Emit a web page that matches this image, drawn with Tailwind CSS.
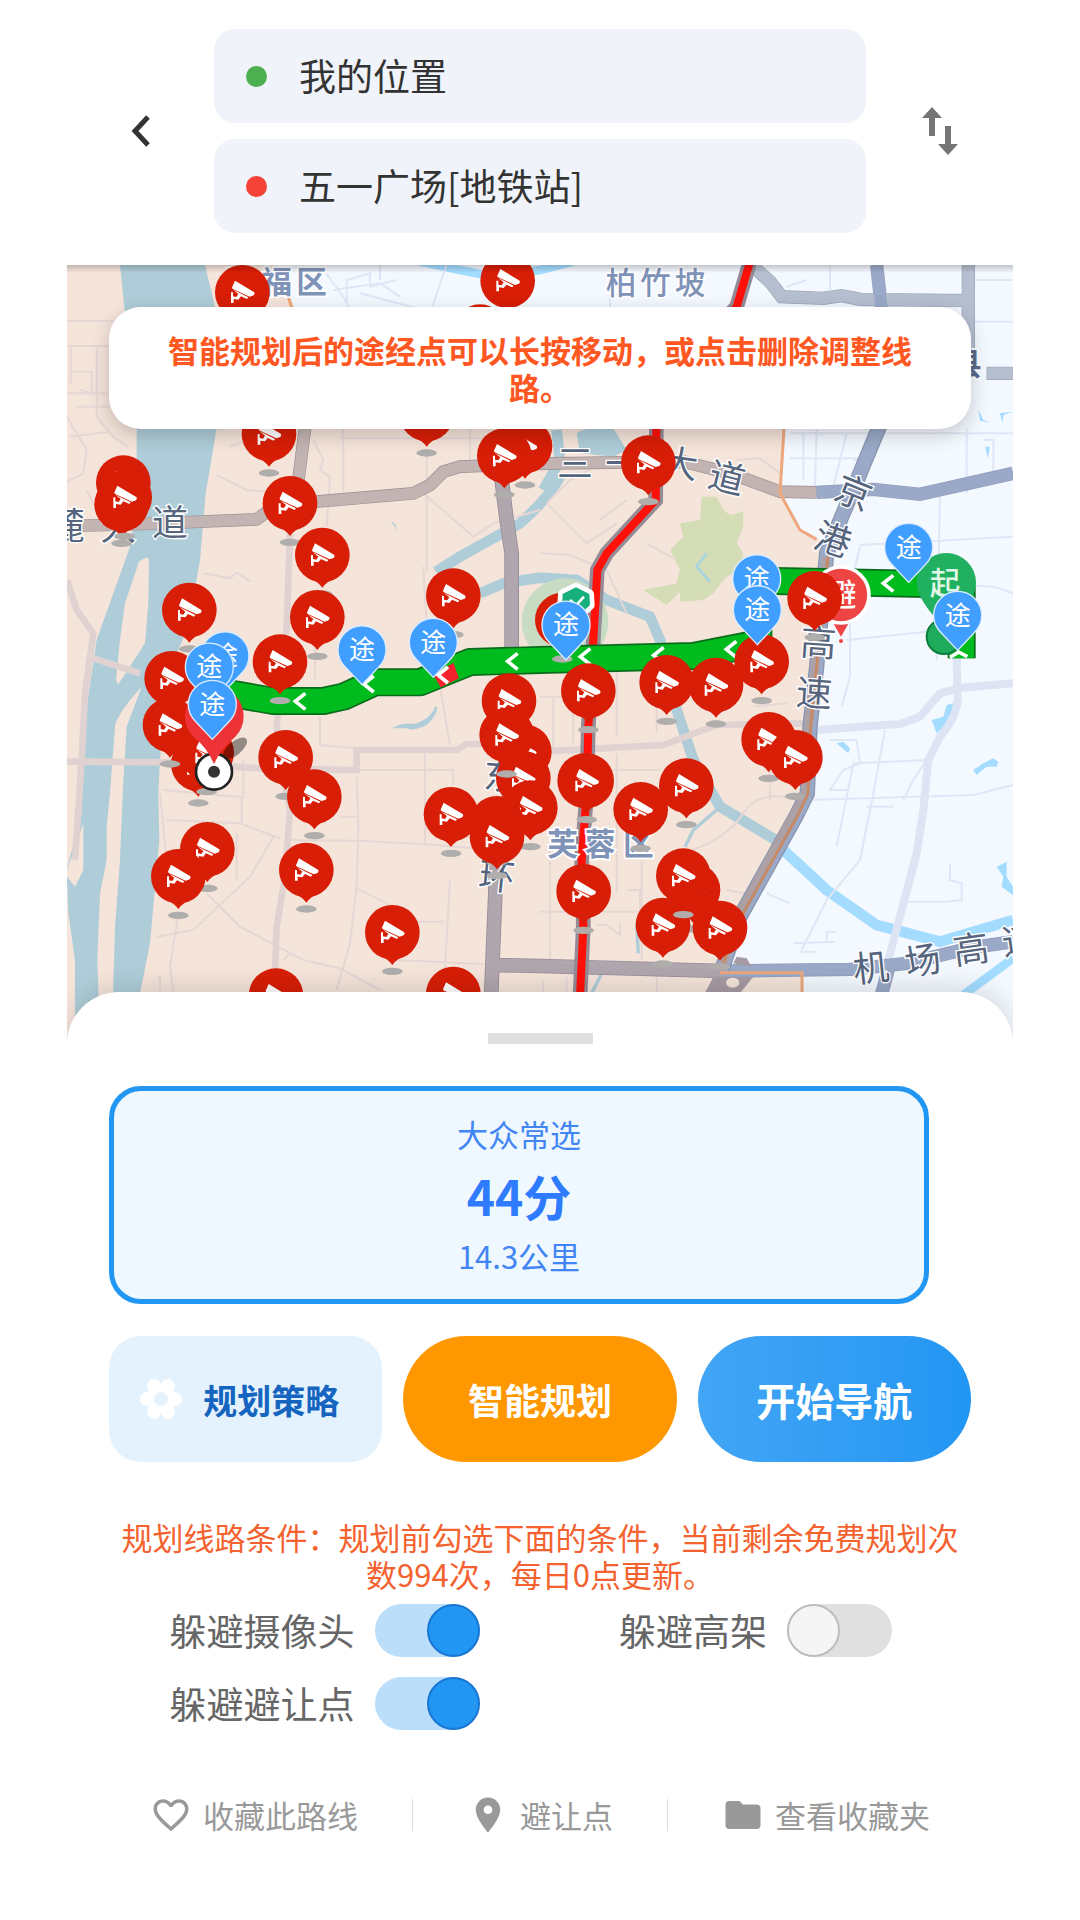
<!DOCTYPE html>
<html lang="zh-CN">
<head>
  <meta charset="UTF-8" />
  <meta name="viewport" content="width=device-width, initial-scale=1.0"/>
  <title>路线规划</title>
  <script src="https://cdn.jsdelivr.net/npm/@tailwindcss/browser@4"></script>
</head>
<body class="bg-white min-h-screen px-[67px] font-['Noto_Sans_CJK_SC',sans-serif]">

  <!-- Start / destination -->
  <header class="flex items-center pt-[29px] pb-8">
    <button type="button" aria-label="返回" class="w-[147px] h-24 flex items-center justify-center">
      <svg class="w-5 h-8" viewBox="0 0 20 32" fill="none" stroke="#333" stroke-width="5"><path d="M17 2 4 16l13 14"/></svg>
    </button>
    <div class="flex-1 flex flex-col gap-4">
      <label class="flex items-center gap-8 h-[94px] px-8 rounded-[21px] bg-[#f0f3f9]">
        <span class="size-[21px] shrink-0 rounded-full bg-[#4caf50]"></span>
        <input type="text" aria-label="起点" value="我的位置" class="flex-1 min-w-0 text-[37px] text-[#333] outline-none" />
      </label>
      <label class="flex items-center gap-8 h-[94px] px-8 rounded-[21px] bg-[#f0f3f9]">
        <span class="size-[21px] shrink-0 rounded-full bg-[#f44336]"></span>
        <input type="text" aria-label="终点" value="五一广场[地铁站]" class="flex-1 min-w-0 text-[37px] text-[#333] outline-none" />
      </label>
    </div>
    <button type="button" aria-label="交换起终点" class="w-[147px] h-24 flex items-center justify-center">
      <svg class="w-9 h-12" viewBox="0 0 36 48" fill="#757575"><path d="M10 0 20 11H13V29H7V11H0ZM23 19h6v18h7L26 48 16 37h7Z"/></svg>
    </button>
  </header>

  <!-- Map -->
  <section class="relative">
    <svg class="block w-full" viewBox="21 15 2838 2325" font-family="'Noto Sans CJK SC', sans-serif">
      <defs>
        <linearGradient id="topShade" x2="0" y2="1">
          <stop offset="0" stop-color="#000" stop-opacity=".2"/>
          <stop offset="1" stop-color="#000" stop-opacity="0"/>
        </linearGradient>
        <g id="cam">
          <ellipse cy="117" rx="31" ry="11" fill="#b0aeac"/>
          <circle r="82" fill="#d81e06"/>
          <path d="M-42 68Q-14 78 0 98Q14 78 42 68Z" fill="#d81e06"/>
          <path d="M-22-35 36 0Q38 5 34 9L22 13-30-11Q-32-16-29-19ZM-28-8 18 15 14 20-4 12-12 22-26 20V32H-34V0H-28V12L-18 14-12 5Z" fill="#fff"/>
        </g>
        <g id="via">
          <path d="M0 104-51 50A72 72 0 1 1 51 50Z" fill="#409eff" stroke="#dcecff" stroke-width="4"/>
          <text y="27" font-size="78" text-anchor="middle" fill="#fff">途</text>
        </g>
        <path id="chev" d="M16-24-14 0 16 24" fill="none" stroke="#fff" stroke-width="11"/>
      </defs>

      <rect x="21" y="15" width="2838" height="2325" fill="#f4f8ff"/>

      <!-- district -->
      <path d="M21 15H480L640 15 690 110 710 160 1100 330 2175 505 2160 700 2220 810 2300 850 2270 1220 2252 1380 2245 1600 2210 1660 2040 1970 1980 2135H2230V2340H21Z" fill="#f5e4da"/>

      <!-- river -->
      <g fill="#aecdd8">
        <path d="M180 15H435L465 140 470 505 437 700 420 900 385 1100 320 1250 300 1500 295 1600 298 1740 280 1940 270 2050 240 2200 215 2340H45L45 2100 25 1960 20 1830 65 1660 65 1500 80 1340 110 1140 210 860 230 730 230 500Z"/>
        <path d="M1550 520Q1600 490 1660 505L1700 570 1660 590 1560 580ZM995 1405Q1030 1385 1060 1392 1110 1380 1125 1340H1132Q1132 1365 1100 1395 1060 1415 1040 1405ZM995 785Q1015 795 1010 822 1012 800 995 790Z"/>
      </g>
      <g fill="#f5e4da">
        <path d="M237 905Q265 885 267 900L265 1030 255 1150 175 1273 168 1260 180 1140 195 1030Z"/>
        <path d="M245 1280 210 1320Q165 1380 165 1400L150 1600 140 1700 140 1800 120 1900 112 2100 120 2340H155L165 2000 180 1800 188 1600 200 1400Z"/>
        <path d="M70 1690V1830L45 1880 21 1850V1830Z"/>
      </g>
      <g fill="none" stroke="#aecdd8" stroke-width="32">
        <path d="M1500 650Q1470 710 1380 790L1200 890 1128 935"/>
        <path d="M1260 1000 1330 970 1440 953 1550 960 1640 1020 1770 1070 1800 1140 1850 1350 1900 1500 1980 1640 2180 1760"/>
        <path d="M1490 510 1500 600 1450 690"/>
      </g>
      <path d="M1970 1650 1900 1710 1875 1760M1635 2120 1595 2200M1730 1990 1735 2080" fill="none" stroke="#aecdd8" stroke-width="10"/>
      <g fill="none" stroke="#a3dcff" stroke-width="32">
        <path d="M2170 1770 2300 1890 2450 1995 2640 2045 2859 1980"/>
        <path d="M2710 2205 2859 2095" stroke-width="26"/>
        <path d="M1060 0 1200 30 1300 50 1440 30 1540 5" stroke-width="26"/>
      </g>
      <g fill="#a3dcff">
        <path d="M2615 1380 2650 1370 2660 1335 2680 1330 2670 1380 2630 1420ZM2740 1530 2770 1510 2800 1495 2815 1505 2810 1520 2780 1520 2750 1545ZM2330 1450 2350 1445 2370 1465 2365 1480ZM2810 1820 2840 1805 2840 1850 2859 1880V1905L2825 1880 2830 1850ZM2755 450 2770 480 2790 488 2760 482ZM2820 460 2859 455 2830 465 2828 490ZM2775 560H2790L2784 595Z"/>
      </g>

      <!-- parks -->
      <path d="M1925 710 1970 710 1990 750 2010 765 2050 755V800L2030 850 2050 880 2040 920 1990 960 1960 1000 1930 1020 1860 1025 1860 995 1820 1035 1750 990 1850 970 1860 930 1830 870 1870 830 1860 790 1920 780Z" fill="#d5ddb6"/>
      <path d="M1940 880 1910 920 1950 965" fill="none" stroke="#a9d5dd" stroke-width="9"/>
      <circle cx="1515" cy="1085" r="130" fill="#c8dcc4"/>
      <circle cx="1515" cy="1085" r="72" fill="#f5e4da"/>

      <!-- small streets, west -->
      <g fill="none" stroke="#e6d7d5" stroke-width="6">
        <path d="M21 183H190M21 258H200M32 260V370M110 260V470L160 530 205 560M35 335H95V400L60 390M21 400H140L180 430M50 440H150M30 530 150 515M21 470 80 570 70 640 21 665M80 690 110 750"/>
        <path d="M470 645 560 690 690 700M510 560 590 530M470 505H500M760 540 790 600 780 630 810 650 800 800M850 505V700M1100 580V940M1090 700 1240 830 1300 790 1440 750M1230 505V600M840 535H1440M430 940 510 955 530 938 570 965M1090 920 1100 1100"/>
        <path d="M310 1590 550 1612V1500M320 1680 540 1690 660 1735M545 1612V1690M640 1730 570 1850 400 2010 290 2030M440 1900 540 2000 730 2100 840 2125 960 2190M530 1720V1860M690 1740 890 1742 1090 1752 1240 1765M890 1550 895 1700 890 1880 870 2050 830 2190M890 1885 1000 1940M1095 1480V1750M690 1530H1180V1575M840 1670H890M1170 1860 1150 2210M1000 2100 1270 2112M1060 1985H1150M355 1960 330 2120 340 2200M300 1600 320 1800M780 1370V1455L890 1465M1140 1280 1170 1455M765 1070V1260M290 2150H300V2190M670 2100 690 2080"/>
        <path d="M1460 730 1530 660 1660 590M1460 730 1580 850 1670 790M1620 780 1700 720M1440 880 1530 885 1640 930 1700 1060M1440 1310H1540V1450M1670 1150V1430M1790 1310V1420M1480 1310V1480M1660 1530H1800M1670 1480V1900M1745 1800V2100M1470 1750V2100M1440 1955H1800M1880 1775Q2000 1740 2050 1660T2220 1625M2130 1530V1620M2180 1330 2080 1340M1700 1890H1740V1990M1610 1995H1640L1680 2025V1990M2000 1890 2100 1910M1450 2160V2210M1790 2140V2200M1520 2150V2210M1860 1300H1940"/>
        <path d="M2030 600 2100 595 2160 640M1850 900 1760 850"/>
      </g>
      <!-- small streets, east -->
      <g fill="none" stroke="#dfe6f5" stroke-width="6">
        <path d="M780 15 850 110 880 170M860 130V60L930 40V80L1010 60M820 90 960 70 1020 110M900 100 1090 150M1160 15 1110 160M960 15V60M1650 15V140M2180 80 2240 60M2310 15V90M2660 120V230M2859 60H2730V20M2550 185H2859"/>
        <path d="M2190 520H2859M2230 520V660M2270 510 2265 680M2360 520 2320 680M2190 595H2400M2380 600 2420 600M2640 700 2630 1200M2720 505V700M2770 540H2800V640M2859 830 2400 855M2859 1000 2800 980 2380 960M2360 1140 2600 1115M2400 860 2370 980 2370 1250 2345 1340M2240 1620 2740 1605 2859 1575M2475 1410 2440 1600 2400 1800 2300 1920 2225 2070M2380 1510 2600 1500 2560 1560 2530 1620M2380 1510 2330 1760M2310 1440H2390L2400 1510 2350 1530 2310 1590H2360M2420 1640H2500M2120 1900 2190 1930M2200 2050 2325 2045M2300 2050V2015H2330M2670 1810V1860L2705 1870V1920L2660 1925H2540M2220 2075H2270"/>
      </g>

      <!-- secondary roads -->
      <g fill="none" stroke="#dfd2d1" stroke-width="20">
        <path d="M21 960 50 1050 100 1120 75 1300 65 1500 45 1800M21 1505 330 1507 600 1525 890 1530V1470H1190L1220 1452H1300"/>
        <path d="M690 820 680 1100 655 1350 650 1400 680 1600 690 1650 675 1850 650 2000 640 2260M1440 1475 1810 1455 1970 1395 2240 1390M100 1195 240 1240"/>
      </g>
      <g fill="none" stroke="#dde4f3" stroke-width="24">
        <path d="M2270 1410 2400 1400 2520 1392 2580 1370 2640 1300 2700 1284 2859 1270M2690 1180 2692 1300Q2700 1360 2640 1430L2605 1500 2590 1650 2570 1780 2480 2120"/>
      </g>

      <!-- main roads -->
      <g fill="none" stroke="#9d8f90" stroke-width="38">
        <path d="M21 798 250 792 590 778 650 735 1060 700 1110 675 1150 635 1200 620 1480 610 1870 605 2010 640 2160 695 2270 697"/>
        <path d="M735 505 715 660"/>
      </g>
      <g fill="none" stroke="#c2b4b2" stroke-width="34">
        <path d="M21 798 250 792 590 778 650 735 1060 700 1110 675 1150 635 1200 620 1480 610 1870 605 2010 640 2160 695 2270 697"/>
        <path d="M735 505 715 660"/>
      </g>
      <g fill="none" stroke="#948b97" stroke-width="44">
        <path d="M1325 660 1340 780 1355 880V1180L1350 1600 1310 1800 1288 2340M1310 2115 1440 2118 1990 2133M1960 2200 2000 2120"/>
      </g>
      <g fill="none" stroke="#b0a6ae" stroke-width="39">
        <path d="M1325 660 1340 780 1355 880V1180L1350 1600 1310 1800 1288 2340M1310 2115 1440 2118 1990 2133M1960 2200 2000 2120"/>
      </g>
      <g fill="none" stroke="#8e9cba" stroke-width="40">
        <path d="M2085 25 2130 65 2165 110 2290 115 2345 107 2400 118 2725 122M2725 15V270M2450 15 2465 150M2780 340H2859" stroke="#9ba5ba"/>
        <path d="M2270 697 2440 688 2580 703 2859 640M1990 2133 2370 2128 2540 2110 2740 2062 2859 2045M2460 2220 2490 2110"/>
      </g>
      <g fill="none" stroke-width="36">
        <path d="M2085 25 2130 65 2165 110 2290 115 2345 107 2400 118 2725 122M2725 15V270M2780 340H2859" stroke="#b6bfd0"/>
        <path d="M2450 15 2465 150M2270 697 2440 688 2580 703 2859 640M1990 2133 2370 2128 2540 2110 2740 2062 2859 2045M2460 2220 2490 2110" stroke="#9aa9c8"/>
      </g>
      <path d="M2460 495 2375 700 2345 770 2300 880 2270 1220 2250 1400 2242 1600 2210 1665 2040 1970 1985 2130" fill="none" stroke="#8793ad" stroke-width="46"/>
      <path d="M2460 495 2375 700 2345 770 2300 880 2270 1220 2250 1400 2242 1600 2210 1665 2040 1970 1985 2130" fill="none" stroke="#9aa9c8" stroke-width="39"/>
      <path d="M2298 890 2265 1220 2245 1400 2236 1600 2200 1665 2034 1970 1985 2130" fill="none" stroke="#aba1a6" stroke-width="26"/>
      <path d="M2304 890 2270 1220 2252 1400 2244 1600 2214 1665 2044 1970 1990 2110" fill="none" stroke="#c58a68" stroke-width="9"/>
      <path d="M685 110 700 160M2172 505 2160 700 2220 810 2270 838M1980 2138H2226V2210" fill="none" stroke="#eda77c" stroke-width="9"/>
      <path d="M1935 2195 1970 2150 2080 2150 2040 2200ZM2020 2110 2030 2090 2060 2095 2075 2120Z" fill="#a79ba3"/>
      <ellipse cx="2018" cy="2168" rx="20" ry="15" fill="#f5e4da"/>

      <!-- red congested road -->
      <g fill="none">
        <path d="M2070 5 2030 140 1790 400 1787 720 1640 880 1612 930 1600 1140 1585 1400 1580 1600 1565 1800 1570 2000 1560 2210" stroke="#948b97" stroke-width="44"/>
        <path d="M2070 5 2030 140 1790 400 1787 720 1640 880 1612 930 1600 1140 1585 1400 1580 1600 1565 1800 1570 2000 1560 2210" stroke="#ff1008" stroke-width="24"/>
      </g>

      <!-- map labels -->
      <g font-size="92" font-weight="700" fill="#7f92b8" stroke="#fff" stroke-width="10" paint-order="stroke" text-anchor="middle">
        <text x="540 650 755" y="99">开福区</text>
        <text x="1683 1786 1890" y="103" font-weight="500">柏竹坡</text>
        <text x="2720" y="345" fill="#5b6b8c">县</text>
        <text x="1508 1620 1735" y="1785">芙蓉区</text>
      </g>
      <g font-size="108" fill="#56657e" stroke="#fff" stroke-width="8" paint-order="stroke" text-anchor="middle">
        <text x="20" y="838">麓</text>
        <text x="175" y="840">大</text>
        <text x="330" y="828">道</text>
        <text x="1545" y="650">三</text>
        <text x="1690" y="650">一</text>
        <text x="1860" y="650" transform="rotate(8 1860 610)">大</text>
        <text x="2000" y="693" transform="rotate(14 2000 655)">道</text>
        <text x="2380" y="738" transform="rotate(22 2380 700)">京</text>
        <text x="2318" y="878" transform="rotate(18 2318 840)">港</text>
        <text x="2275" y="1188" transform="rotate(4 2275 1150)">高</text>
        <text x="2262" y="1338" transform="rotate(4 2262 1300)">速</text>
        <text x="1325" y="1588" transform="rotate(4 1325 1550)">东</text>
        <text x="1310" y="1888" transform="rotate(6 1310 1850)">环</text>
        <text x="2433" y="2163" transform="rotate(-6 2433 2125)">机</text>
        <text x="2588" y="2141" transform="rotate(-10 2588 2103)">场</text>
        <text x="2733" y="2107" transform="rotate(-8 2733 2069)">高</text>
        <text x="2880" y="2080" transform="rotate(-8 2880 2045)">速</text>
      </g>

      <!-- planned route -->
      <g fill="none" stroke-linejoin="round">
        <path d="M460 1290 530 1304 640 1323H790L850 1310 945 1267H1080L1230 1206 1440 1200 1900 1188 2095 1150V962L2600 972 2705 985V1195" stroke="#0a6b1a" stroke-width="84"/>
        <path d="M460 1290 530 1304 640 1323H790L850 1310 945 1267H1080L1230 1206 1440 1200 1900 1188 2095 1150V962L2600 972 2705 985V1195" stroke="#00bb1e" stroke-width="74"/>
      </g>
      <path d="M1120 1245 1180 1208 1197 1255 1142 1282Z" fill="#f5222d"/>
      <use href="#chev" x="720" y="1324"/><use href="#chev" x="925" y="1272"/><use href="#chev" x="1148" y="1245"/>
      <use href="#chev" x="1357" y="1204"/><use href="#chev" x="1575" y="1190"/><use href="#chev" x="1795" y="1186"/>
      <use href="#chev" x="2013" y="1168"/><use href="#chev" x="2484" y="970"/><use href="#chev" x="2260" y="968"/>
      <path d="M2670 1192 2696 1176 2722 1190" fill="none" stroke="#fff" stroke-width="11"/>

      <!-- avoid point -->
      <path d="M2320 1090H2366L2343 1130Z" fill="#ef4444"/>
      <circle cx="2343" cy="1143" r="6" fill="#ef4444"/>
      <circle cx="2343" cy="1005" r="84" fill="#ef4444" stroke="#fff" stroke-width="11"/>
      <text x="2343" y="1038" font-size="92" font-weight="500" text-anchor="middle" fill="#fff">避</text>

      <!-- start pin -->
      <circle cx="2652" cy="1130" r="52" fill="#1fab5c" stroke="#0d7f3d" stroke-width="6"/>
      <path d="M2660 1110Q2570 1020 2570 968A89 89 0 0 1 2748 968Q2748 1020 2660 1110Z" fill="#21b060"/>
      <text x="2655" y="1003" font-size="92" font-weight="500" text-anchor="middle" fill="#dff7e6">起</text>

      <!-- cameras -->
      <use href="#cam" x="547" y="97"/><use href="#cam" x="1260" y="215"/><use href="#cam" x="1343" y="62"/>
      <use href="#cam" x="627" y="522"/><use href="#cam" x="1100" y="462"/>
      <use href="#cam" x="190" y="668"/><use href="#cam" x="185" y="733"/><use href="#cam" x="194" y="712"/>
      <use href="#cam" x="690" y="730"/><use href="#cam" x="787" y="885"/><use href="#cam" x="772" y="1072"/>
      <use href="#cam" x="388" y="1050"/><use href="#cam" x="1180" y="1007"/>
      <use href="#cam" x="1395" y="558"/><use href="#cam" x="1333" y="587"/><use href="#cam" x="1765" y="608"/>
      <use href="#cam" x="2264" y="1015"/><use href="#cam" x="1507" y="1080"/>
      <use href="#cam" x="335" y="1255"/><use href="#cam" x="415" y="1512"/><use href="#cam" x="440" y="1478"/><use href="#cam" x="330" y="1395"/>
      <use href="#cam" x="660" y="1205"/><use href="#cam" x="677" y="1492"/><use href="#cam" x="763" y="1610"/>
      <use href="#cam" x="442" y="1768"/><use href="#cam" x="355" y="1849"/><use href="#cam" x="739" y="1830"/>
      <use href="#cam" x="997" y="2017"/><use href="#cam" x="648" y="2207"/><use href="#cam" x="1180" y="2202"/>
      <use href="#cam" x="1347" y="1322"/><use href="#cam" x="1393" y="1475"/><use href="#cam" x="1390" y="1555"/>
      <use href="#cam" x="1340" y="1425"/><use href="#cam" x="1173" y="1663"/><use href="#cam" x="1411" y="1643"/>
      <use href="#cam" x="1311" y="1690"/><use href="#cam" x="1311" y="1730"/>
      <use href="#cam" x="1585" y="1292"/><use href="#cam" x="2105" y="1205"/><use href="#cam" x="1820" y="1267"/><use href="#cam" x="1968" y="1275"/>
      <circle cx="1574" cy="1562" r="82" fill="#d81e06"/><use href="#cam" x="1580" y="1562"/><use href="#cam" x="1879" y="1577"/><use href="#cam" x="1742" y="1648"/>
      <use href="#cam" x="2126" y="1438"/><use href="#cam" x="2206" y="1492"/><use href="#cam" x="1571" y="1894"/>
      <use href="#cam" x="1899" y="1890"/><use href="#cam" x="1809" y="1995"/><use href="#cam" x="1980" y="2004"/><use href="#cam" x="1870" y="1847"/>

      <!-- metro exit -->
      <path d="M1548 982 1588 1002 1590 1035 1548 1075 1506 1035 1508 1002Z" fill="#17b07c" stroke="#fff" stroke-width="28" stroke-linejoin="round"/>
      <path d="M1548 982 1588 1002 1590 1035 1548 1075 1506 1035 1508 1002Z" fill="#17b07c"/>
      <path d="M1530 1020 1548 1036 1572 1010" fill="none" stroke="#fff" stroke-width="8"/>

      <!-- destination pin -->
      <ellipse cx="525" cy="1465" rx="44" ry="20" fill="#000" opacity=".4" transform="rotate(-40 525 1465)"/>
      <circle cx="462" cy="1535" r="54" fill="#fff" stroke="#222" stroke-width="8"/>
      <circle cx="462" cy="1535" r="18" fill="#333"/>
      <path d="M462 1512Q440 1460 400 1430A88 88 0 1 1 526 1430Q480 1470 462 1512Z" fill="#ee3338"/>

      <!-- way points -->
      <use href="#via" x="495" y="1188"/><use href="#via" x="448" y="1222"/><use href="#via" x="457" y="1334"/>
      <use href="#via" x="906" y="1170"/><use href="#via" x="1120" y="1148"/><use href="#via" x="1518" y="1096"/>
      <use href="#via" x="2090" y="957"/><use href="#via" x="2092" y="1050"/>
      <use href="#via" x="2546" y="863"/><use href="#via" x="2693" y="1067"/>

      <rect x="21" y="15" width="2838" height="24" fill="url(#topShade)"/>
    </svg>
    <p class="absolute inset-x-[42px] top-[42px] px-12 pt-6 pb-6 rounded-[32px] bg-white text-center text-[31px] leading-[37px] font-bold text-[#ff5722] shadow-[0_6px_20px_rgba(0,0,0,0.2)]">智能规划后的途经点可以长按移动，或点击删除调整线路。</p>
  </section>

  <!-- Bottom sheet -->
  <main class="relative -mt-12 px-[42px] pt-[41px] pb-20 rounded-t-[52px] bg-white shadow-[0_-6px_24px_rgba(0,0,0,0.12)] [clip-path:inset(-48px_0_0_0)]">
    <div class="w-[105px] h-[11px] mx-auto bg-[#e0e0e0]"></div>

    <button type="button" class="block w-[calc(100%-42px)] mt-[42px] pt-[22px] pb-[22px] rounded-[32px] border-[5px] border-[#2196f3] bg-[#f0f8ff] text-center text-[31px] leading-[42px] text-[#4285f4]">
      <span class="block">大众常选</span>
      <span class="block my-4 text-[48px] leading-[48px] font-bold text-[#2f7bff]">44分</span>
      <span class="block">14.3公里</span>
    </button>

    <div class="grid grid-cols-3 gap-[21px] mt-8 font-bold">
      <button type="button" class="h-[126px] pr-3 flex items-center justify-center gap-[21px] rounded-[32px] bg-[#e3f2fd] text-[34px] text-[#1565c0]">
        <svg class="size-[42px]" viewBox="0 0 42 42" fill="#fff">
          <circle cx="21" cy="21" r="15"/>
          <circle cx="35" cy="21" r="7"/><circle cx="28" cy="8" r="7"/><circle cx="14" cy="8" r="7"/>
          <circle cx="7" cy="21" r="7"/><circle cx="14" cy="34" r="7"/><circle cx="28" cy="34" r="7"/>
          <circle cx="21" cy="21" r="7" fill="#e3f2fd"/>
        </svg>
        规划策略
      </button>
      <button type="button" class="h-[126px] rounded-full bg-[#ff9800] text-[36px] text-white">智能规划</button>
      <button type="button" class="h-[126px] rounded-full bg-linear-to-r from-[#42a5f5] to-[#2196f3] text-[39px] text-white">开始导航</button>
    </div>

    <p class="mt-14 text-center text-[31px] leading-[37px] text-[#f4622f]">规划线路条件：规划前勾选下面的条件，当前剩余免费规划次数994次，每日0点更新。</p>

    <div class="grid grid-cols-2 gap-y-5 mt-3 text-[37px] leading-[53px] text-[#666]">
      <label class="flex items-center justify-center gap-5">躲避摄像头
        <input type="checkbox" checked class="appearance-none w-[105px] h-[53px] rounded-full bg-[#e0e0e0] checked:bg-[#bbdefb] before:block before:size-[53px] before:rounded-full before:border-2 before:border-[#bdbdbd] before:bg-[#f5f5f5] checked:before:ml-[52px] checked:before:border-[#1976d2] checked:before:bg-[#2196f3]" />
      </label>
      <label class="flex items-center justify-center gap-5">躲避高架
        <input type="checkbox" class="appearance-none w-[105px] h-[53px] rounded-full bg-[#e0e0e0] checked:bg-[#bbdefb] before:block before:size-[53px] before:rounded-full before:border-2 before:border-[#bdbdbd] before:bg-[#f5f5f5] checked:before:ml-[52px] checked:before:border-[#1976d2] checked:before:bg-[#2196f3]" />
      </label>
      <label class="flex items-center justify-center gap-5">躲避避让点
        <input type="checkbox" checked class="appearance-none w-[105px] h-[53px] rounded-full bg-[#e0e0e0] checked:bg-[#bbdefb] before:block before:size-[53px] before:rounded-full before:border-2 before:border-[#bdbdbd] before:bg-[#f5f5f5] checked:before:ml-[52px] checked:before:border-[#1976d2] checked:before:bg-[#2196f3]" />
      </label>
    </div>

    <nav class="flex items-center justify-center gap-[54px] mt-16 text-[31px] leading-[42px] text-[#999]">
      <button type="button" class="flex items-center gap-[11px]">
        <svg class="size-[42px]" viewBox="0 0 24 24" fill="currentColor"><path d="M16.5 3c-1.74 0-3.41.81-4.5 2.09C10.91 3.81 9.24 3 7.5 3 4.42 3 2 5.42 2 8.5c0 3.78 3.4 6.86 8.55 11.54L12 21.35l1.45-1.32C18.6 15.36 22 12.28 22 8.5 22 5.42 19.58 3 16.5 3zm-4.4 15.55l-.1.1-.1-.1C7.14 14.24 4 11.39 4 8.5 4 6.5 5.5 5 7.5 5c1.54 0 3.04.99 3.57 2.36h1.87C13.46 5.99 14.96 5 16.5 5c2 0 3.5 1.5 3.5 3.5 0 2.89-3.14 5.74-7.9 10.05z"/></svg>
        收藏此路线
      </button>
      <span class="w-px h-8 bg-[#ddd]"></span>
      <button type="button" class="flex items-center gap-[11px]">
        <svg class="size-[42px]" viewBox="0 0 24 24" fill="currentColor"><path d="M12 2C8.13 2 5 5.13 5 9c0 5.25 7 13 7 13s7-7.75 7-13c0-3.87-3.13-7-7-7zm0 9.5a2.5 2.5 0 0 1 0-5 2.5 2.5 0 0 1 0 5z"/></svg>
        避让点
      </button>
      <span class="w-px h-8 bg-[#ddd]"></span>
      <button type="button" class="flex items-center gap-[11px]">
        <svg class="size-[42px]" viewBox="0 0 24 24" fill="currentColor"><path d="M10 4H4c-1.1 0-1.99.9-1.99 2L2 18c0 1.1.9 2 2 2h16c1.1 0 2-.9 2-2V8c0-1.1-.9-2-2-2h-8l-2-2z"/></svg>
        查看收藏夹
      </button>
    </nav>
  </main>

</body>
</html>
